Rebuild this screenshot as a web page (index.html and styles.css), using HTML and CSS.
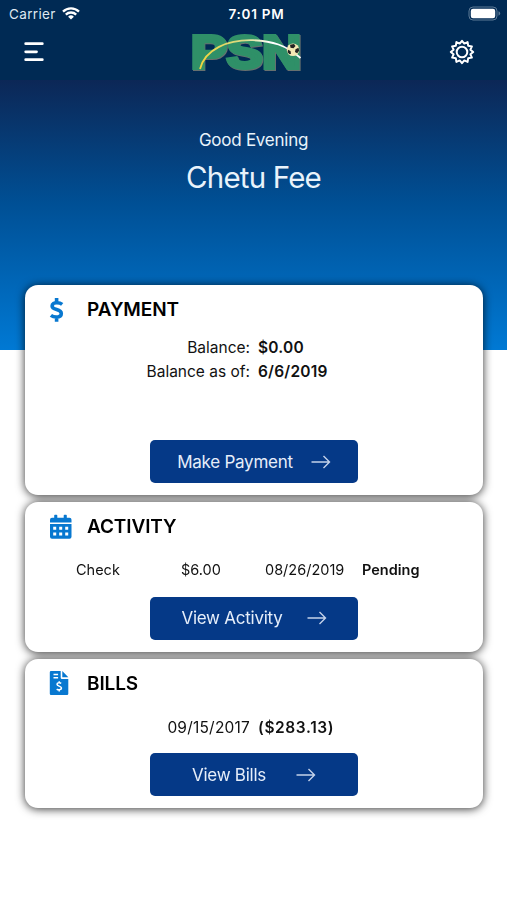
FILE: index.html
```html
<!DOCTYPE html>
<html lang="en">

<head>
    <meta charset="UTF-8">
    <meta name="viewport" content="width=device-width, initial-scale=1.0">
    <title>PSN Payments</title>
    <link rel="stylesheet" href="styles.css">
</head>

<body>
    <header class="top-bar">
        <div class="status-bar">
            <div class="carrier">
                <span>Carrier</span>
                <svg class="wifi" viewBox="0 0 18 13">
                    <path d="M1 4.6a11.5 11.5 0 0 1 16 0M3.8 7.6a7.5 7.5 0 0 1 10.4 0" />
                    <path class="wifi-dot" d="M9 12.6 6.1 9.7a4.2 4.2 0 0 1 5.8 0z" />
                </svg>
            </div>
            <span class="time">7:01 PM</span>
            <svg class="battery" viewBox="0 0 33 15">
                <rect class="battery-shell" x="1" y="1" width="28" height="13" rx="4" />
                <rect class="battery-level" x="2.8" y="2.8" width="24.4" height="9.4" rx="2.2" />
                <path class="battery-tip" d="M30.5 5.3q1.7.6 1.7 2.2t-1.7 2.2z" />
            </svg>
        </div>
        <nav class="nav-bar">
            <svg class="menu-icon" viewBox="0 0 20 20">
                <path d="M1.7 1.7h16.6M1.7 9.8h10.8M1.7 17.7h16.6" />
            </svg>
            <svg class="logo" viewBox="0 -10 116 60">
                <defs>
                    <linearGradient id="trail">
                        <stop offset="0" stop-color="#f2d43c" />
                        <stop offset="0.45" stop-color="#d9dc8a" />
                        <stop offset="0.7" stop-color="#ffffff" />
                    </linearGradient>
                </defs>
                <text class="logo-shade" x="2.8" y="36.8" textLength="110" lengthAdjust="spacingAndGlyphs">PSN</text>
                <text class="logo-text" x="2" y="36" textLength="110" lengthAdjust="spacingAndGlyphs">PSN</text>
                <path class="logo-trail" d="M11 37C16 17 39 7.500 64 8.200C83 9 97 13 111.500 26" />
                <circle class="ball" cx="104" cy="17.800" r="6.300" />
                <path class="ball-spots" d="M101 12.800l4-.8 1.500 2-2 2.300-3-.6zM106.500 17.300l3-1.500.7 3-2 2.500-2.200-1.200zM99 17.800l2.500 1.200.5 2.700-1.500.6-1.900-2z" />
            </svg>
            <svg class="gear-icon" viewBox="0 0 26 26">
                <path d="M13 1.8l2.300 2.800 3.300-1.500.6 3.700 3.700.6-1.500 3.300L24.200 13l-2.800 2.300 1.500 3.300-3.700.6-.6 3.700-3.300-1.500L13 24.200l-2.300-2.800-3.300 1.500-.6-3.700-3.700-.6 1.500-3.300L1.800 13l2.800-2.300-1.500-3.300 3.700-.6.6-3.700 3.300 1.500z" />
                <circle cx="13" cy="13" r="5.300" />
            </svg>
        </nav>
    </header>

    <section class="greeting">
        <p>Good Evening</p>
        <h1>Chetu Fee</h1>
    </section>

    <main class="cards">
        <section class="card payment">
            <div class="card-title">
                <svg class="card-icon" viewBox="0 0 24 26">
                    <path class="dollar" d="M13.200 7.300C11.700 6.100 9.700 5.800 7.800 5.800C5.200 5.800 3.100 6.900 3.100 9C3.100 13.700 12.300 11.400 12.300 16.400C12.300 19 9.800 20 7.400 20C5.200 20 3.300 19.400 1.900 18.300M7.600 1v4.800M7.600 20v4.800" />
                </svg>
                <h2>PAYMENT</h2>
            </div>
            <dl class="balance">
                <dt>Balance:</dt>
                <dd>$0.00</dd>
                <dt>Balance as of:</dt>
                <dd>6/6/2019</dd>
            </dl>
            <button class="card-btn">
                <span>Make Payment</span>
                <svg class="arrow" viewBox="0 0 20 14"><path d="M.5 7h18M12.500 1l6 6-6 6" /></svg>
            </button>
        </section>

        <section class="card activity">
            <div class="card-title">
                <svg class="card-icon" viewBox="0 0 24 26">
                    <path class="solid" d="M1 8.500V5.800Q1 3.800 3 3.800H5.200V1.500Q5.200.8 6 .8H7.500Q8.300.8 8.300 1.500V3.800H14.700V1.500Q14.700.8 15.500.8H17Q17.800.8 17.800 1.500V3.800H20.500Q22.500 3.800 22.500 5.800V8.500zM1 10H22.500V22.700Q22.500 24.700 20.500 24.700H3Q1 24.700 1 22.700z" />
                    <path class="cutout" d="M4.200 12.800h3v3h-3zM10.200 12.800h3v3h-3zM16.200 12.800h3v3h-3zM4.200 18.600h3v3h-3zM10.200 18.600h3v3h-3zM16.200 18.600h3v3h-3z" />
                </svg>
                <h2>ACTIVITY</h2>
            </div>
            <div class="activity-row">
                <span>Check</span>
                <span>$6.00</span>
                <span>08/26/2019</span>
                <strong>Pending</strong>
            </div>
            <button class="card-btn">
                <span>View Activity</span>
                <svg class="arrow" viewBox="0 0 20 14"><path d="M.5 7h18M12.500 1l6 6-6 6" /></svg>
            </button>
        </section>

        <section class="card bills">
            <div class="card-title">
                <svg class="card-icon" viewBox="0 0 24 26">
                    <path class="solid" d="M2 1H11.700V7.700Q11.700 9 13 9H19.300V23.700Q19.300 25 18 25H2Q.8 25 .8 23.700V2.200Q.8 1 2 1zM13.300 1L19.300 7.200H13.300z" />
                    <path class="bill-lines" d="M4.500 4.600h4.600M4.500 7.700h4.600" />
                    <path class="bill-dollar" d="M12.200 13.300C11.300 12.700 8 12.300 8 14.300C8 16.500 12.500 15.700 12.500 18.100C12.500 20.200 9 20.100 7.700 19.100M10.200 11.300v1.600M10.200 19.600v1.800" />
                </svg>
                <h2>BILLS</h2>
            </div>
            <div class="bill-row">
                <span>09/15/2017</span>
                <strong>($283.13)</strong>
            </div>
            <button class="card-btn">
                <span>View Bills</span>
                <svg class="arrow" viewBox="0 0 20 14"><path d="M.5 7h18M12.500 1l6 6-6 6" /></svg>
            </button>
        </section>
    </main>
</body>

</html>
```
FILE: styles.css
```css
* {
    box-sizing: border-box;
    margin: 0;
    padding: 0;
}

body {
    min-height: 900px;
    background: #fff;
    color: #111;
    font-family: Inter, "Liberation Sans", sans-serif;
}

svg {
    display: block;
    fill: none;
}

.top-bar {
    height: 80px;
    background: #002a54;
    color: #fff;
}

.status-bar {
    display: grid;
    grid-template-columns: 1fr auto 1fr;
    align-items: center;
    height: 27px;
    padding: 0 6px 0 9px;
    font-size: 13.5px;
}

.carrier {
    display: flex;
    align-items: center;
    gap: 6px;
    color: #dfe8f0;
    letter-spacing: 0.35px;
}

.wifi {
    width: 18px;
    height: 13px;
    stroke: #fff;
    stroke-width: 2.3;
}

.wifi .wifi-dot {
    fill: #fff;
    stroke: none;
}

.time {
    padding-left: 3px;
    font-weight: 600;
    letter-spacing: 0.75px;
}

.battery {
    width: 33px;
    height: 15px;
    justify-self: end;
}

.battery-shell {
    stroke: #5d7a96;
}

.battery-level {
    fill: #fff;
}

.battery-tip {
    fill: #5d7a96;
}

.nav-bar {
    display: grid;
    grid-template-columns: 1fr 116px 1fr;
    align-items: center;
    height: 50px;
    padding: 0 32px 0 24px;
}

.menu-icon {
    width: 20px;
    height: 20px;
    stroke: #fff;
    stroke-width: 2.8;
    stroke-linecap: round;
}

.logo {
    width: 116px;
    height: 60px;
    margin: -5px 0 -5px -3px;
}

.logo text {
    font-family: "Liberation Sans", sans-serif;
    font-size: 46px;
    font-weight: 700;
    stroke-width: 4;
}

.logo-shade {
    fill: #66706f;
    stroke: #66706f;
}

.logo-text {
    fill: #2f9068;
    stroke: #2f9068;
}

.logo-trail {
    stroke: url(#trail);
    stroke-width: 1.8;
}

.ball {
    fill: #f3e9b4;
}

.ball-spots {
    fill: #222;
}

.gear-icon {
    width: 26px;
    height: 26px;
    justify-self: end;
    stroke: #fff;
    stroke-width: 2;
    stroke-linejoin: round;
}

.greeting {
    height: 270px;
    padding-top: 49px;
    background: linear-gradient(#0c2756, #004f94 45%, #0079d4);
    color: #e9f3fb;
    text-align: center;
}

.greeting p {
    font-size: 17px;
    line-height: 22px;
    letter-spacing: -0.25px;
}

.greeting h1 {
    margin-top: 8px;
    font-size: 29.5px;
    font-weight: 400;
    line-height: 36px;
    letter-spacing: -0.8px;
}

.cards {
    display: grid;
    gap: 7px;
    margin: -65px 24px 0 25px;
    filter: drop-shadow(0 1px 5px rgba(0, 0, 0, 0.8));
}

.card {
    display: flex;
    flex-direction: column;
    align-items: center;
    height: 149.5px;
    padding: 11px 24px 12px;
    border-radius: 13px;
    background: #fff;
}

.payment {
    height: 210px;
}

.card-title {
    display: flex;
    align-items: center;
    align-self: stretch;
    gap: 14px;
    height: 27px;
}

.card-icon {
    width: 24px;
    height: 26px;
}

.card-title h2 {
    color: #000;
    font-size: 19px;
    font-weight: 600;
    letter-spacing: -0.1px;
}

.dollar {
    stroke: #0878d0;
    stroke-width: 3.6;
}

.solid {
    fill: #0878d0;
}

.cutout {
    fill: #fff;
}

.bill-lines,
.bill-dollar {
    stroke: #fff;
    stroke-width: 1.5;
}

.balance {
    display: grid;
    grid-template-columns: 201px 1fr;
    align-self: stretch;
    column-gap: 8px;
    margin-top: 13px;
    font-size: 15.5px;
    line-height: 24px;
}

.balance dt {
    text-align: right;
}

.balance dd,
.activity-row strong,
.bill-row strong {
    font-weight: 600;
}

.balance dd {
    letter-spacing: 0.2px;
}

.activity-row {
    display: grid;
    grid-template-columns: 105px 84px 97px auto;
    align-self: stretch;
    margin: 20px 0 0 27px;
    font-size: 14.5px;
    line-height: 20px;
}

.bill-row {
    display: grid;
    grid-template-columns: 201px 1fr;
    align-self: stretch;
    column-gap: 8px;
    margin-top: 21px;
    font-size: 15.5px;
    line-height: 20px;
}

.bill-row span {
    text-align: right;
    letter-spacing: 0.2px;
}

.bill-row strong {
    letter-spacing: 0.6px;
}

.card-btn {
    display: flex;
    align-items: center;
    justify-content: center;
    width: 208px;
    height: 43px;
    margin: auto 0 0 0;
    border: none;
    border-radius: 5px;
    background: #053987;
    color: #e6eefa;
    font-family: inherit;
    font-size: 17px;
    letter-spacing: -0.25px;
    cursor: pointer;
}

.arrow {
    width: 20px;
    height: 14px;
    margin-left: 18px;
    stroke: #c4d2ea;
    stroke-width: 1.4;
}

.activity .arrow {
    margin-left: 24px;
}

.bills .arrow {
    margin-left: 30px;
}
```
